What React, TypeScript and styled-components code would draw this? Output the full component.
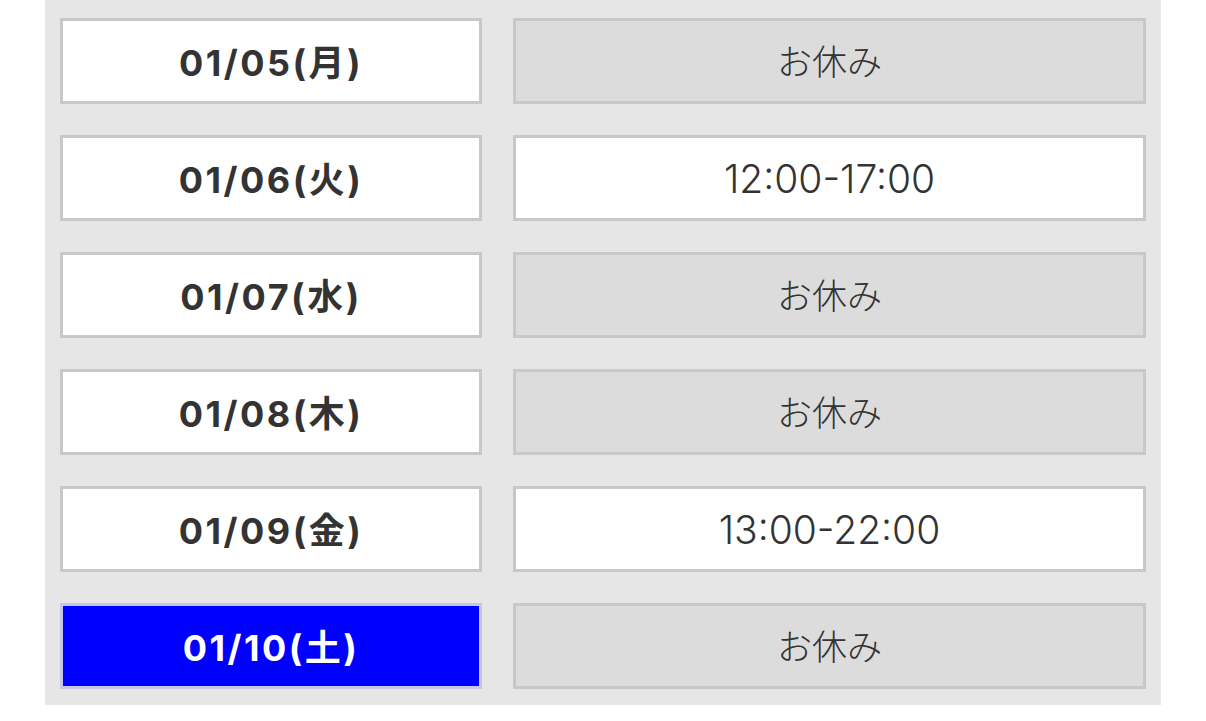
import React from "react";
import styled, { createGlobalStyle } from "styled-components";

const Global = createGlobalStyle`
  html, body { margin: 0; padding: 0; background: #ffffff; }
  body { font-family: "Noto Sans CJK JP", "Noto Sans", sans-serif; color: #333333; }
`;

const Panel = styled.div`
  margin-left: 45px;
  width: 1116px;
  box-sizing: border-box;
  background: #e6e6e6;
  padding: 18px 15px 16px;
  display: grid;
  grid-template-columns: 422px 633px;
  column-gap: 31px;
  row-gap: 31px;
`;

const DateCell = styled.div<{ $active?: boolean }>`
  height: 86px;
  box-sizing: border-box;
  padding-bottom: 3px;
  border: 3px solid ${(p) => (p.$active ? "#c6c6e8" : "#c8c8c8")};
  background: ${(p) => (p.$active ? "#0000ff" : "#ffffff")};
  color: ${(p) => (p.$active ? "#ffffff" : "#333333")};
  display: flex;
  align-items: center;
  justify-content: center;
  font-family: Inter, "Noto Sans CJK JP", sans-serif;
  font-size: 36px;
  font-weight: 700;
  letter-spacing: 2.5px;
`;

const TimeCell = styled.div<{ $off?: boolean }>`
  height: 86px;
  box-sizing: border-box;
  padding-bottom: ${(p) => (p.$off ? "4px" : "0")};
  border: 3px solid #c8c8c8;
  background: ${(p) => (p.$off ? "#dcdcdc" : "#ffffff")};
  color: #333333;
  display: flex;
  align-items: center;
  justify-content: center;
  font-family: ${(p) => (p.$off ? `"Noto Sans CJK JP", sans-serif` : `Inter, "Noto Sans CJK JP", sans-serif`)};
  font-size: ${(p) => (p.$off ? "35px" : "39px")};
  font-weight: 300;
`;

const rows = [
  { d: "01/05(月)", t: null },
  { d: "01/06(火)", t: "12:00-17:00" },
  { d: "01/07(水)", t: null },
  { d: "01/08(木)", t: null },
  { d: "01/09(金)", t: "13:00-22:00" },
  { d: "01/10(土)", t: null, active: true },
];

export default function App() {
  return (
    <>
      <Global />
      <Panel>
        {rows.map((r) => (
          <React.Fragment key={r.d}>
            <DateCell $active={r.active}>{r.d}</DateCell>
            <TimeCell $off={!r.t}>{r.t ?? "お休み"}</TimeCell>
          </React.Fragment>
        ))}
      </Panel>
    </>
  );
}
